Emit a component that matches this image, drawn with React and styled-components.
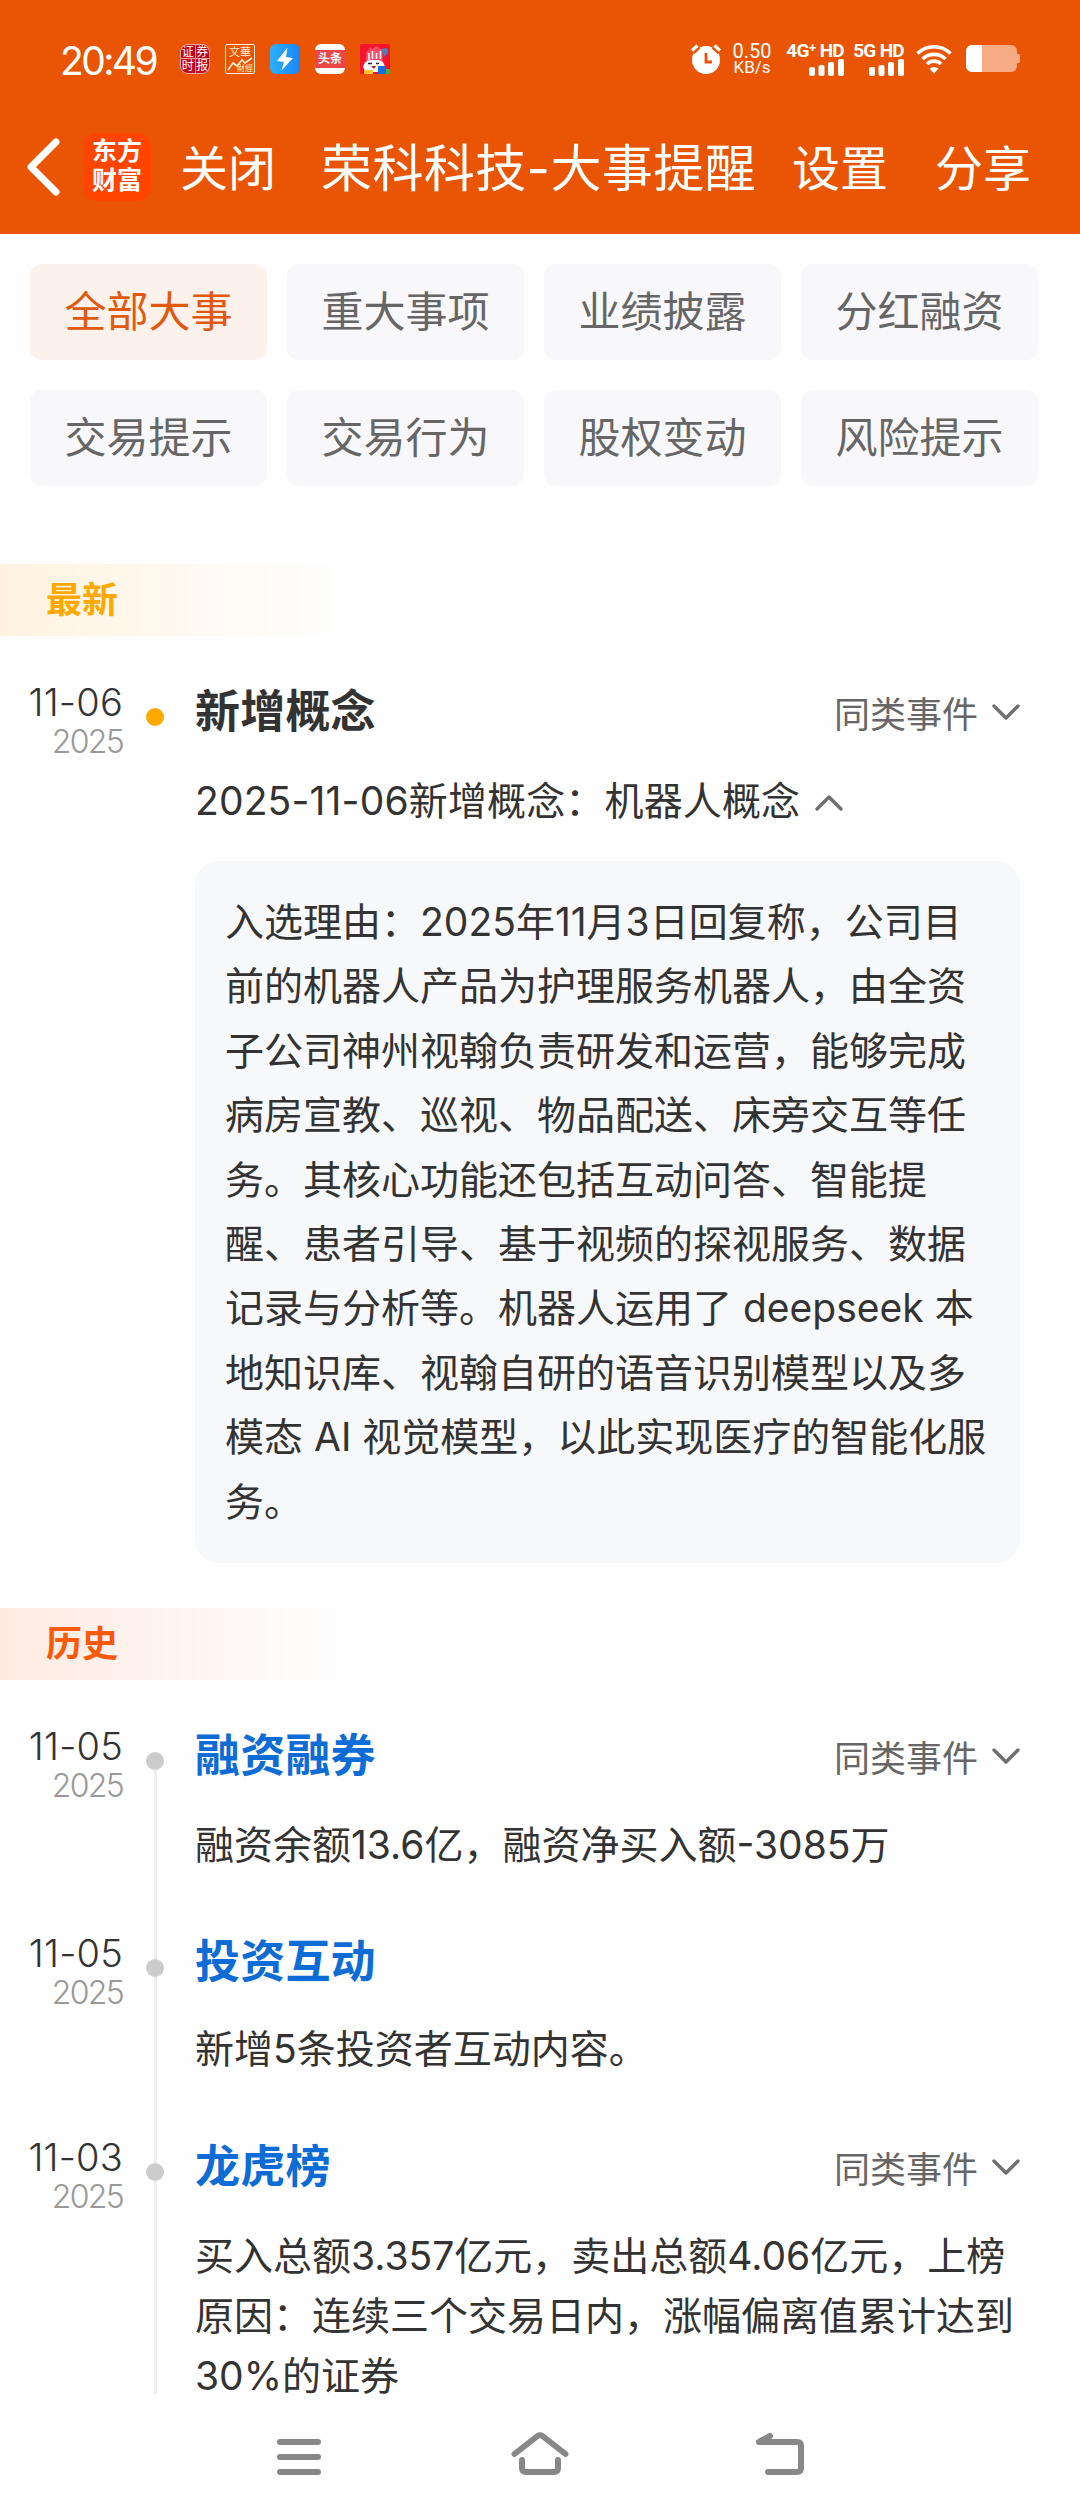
import styled, { createGlobalStyle, css } from "styled-components";

const tabs = [
  "全部大事",
  "重大事项",
  "业绩披露",
  "分红融资",
  "交易提示",
  "交易行为",
  "股权变动",
  "风险提示",
];

const reasonLines = [
  "入选理由：2025年11月3日回复称，公司目",
  "前的机器人产品为护理服务机器人，由全资",
  "子公司神州视翰负责研发和运营，能够完成",
  "病房宣教、巡视、物品配送、床旁交互等任",
  "务。其核心功能还包括互动问答、智能提",
  "醒、患者引导、基于视频的探视服务、数据",
  "记录与分析等。机器人运用了 deepseek 本",
  "地知识库、视翰自研的语音识别模型以及多",
  "模态 AI 视觉模型，以此实现医疗的智能化服",
  "务。",
];

const history = [
  {
    date: "11-05",
    year: "2025",
    title: "融资融券",
    similar: true,
    lines: ["融资余额13.6亿，融资净买入额-3085万"],
  },
  {
    date: "11-05",
    year: "2025",
    title: "投资互动",
    similar: false,
    lines: ["新增5条投资者互动内容。"],
  },
  {
    date: "11-03",
    year: "2025",
    title: "龙虎榜",
    similar: true,
    lines: [
      "买入总额3.357亿元，卖出总额4.06亿元，上榜",
      "原因：连续三个交易日内，涨幅偏离值累计达到",
      "30%的证券",
    ],
  },
];

const Chevron = ({ up }) => (
  <ChevronSvg viewBox="0 0 28 16">
    <path d={up ? "M2 14 14 2l12 12" : "M2 2l12 12L26 2"} />
  </ChevronSvg>
);

const Signal = ({ label, width }) => (
  <SignalWrapper $width={width}>
    <SignalLabel>{label}</SignalLabel>
    <svg width="35" height="17" fill="#fff">
      <rect x="0" y="8" width="6" height="9" rx="2" />
      <rect x="9.5" y="6" width="6" height="11" rx="2" />
      <rect x="19" y="3" width="6" height="14" rx="2" />
      <rect x="29" y="0" width="6" height="17" rx="2" />
    </svg>
  </SignalWrapper>
);

const StatusIcons = () => (
  <AppIcons>
    <SecuritiesTimes>
      <span>证</span>
      <span>券</span>
      <span>时</span>
      <span>报</span>
    </SecuritiesTimes>
    <Wenhua>
      <span>文華</span>
      <svg width="28" height="16" viewBox="0 0 28 16" fill="none" stroke="#fff1d8">
        <path d="M2 14l5-7 4 3 5-6 3 3 7-5" strokeWidth="1.6" />
      </svg>
      <small>財經</small>
    </Wenhua>
    <svg width="30" height="30" viewBox="0 0 30 30">
      <defs>
        <linearGradient id="bolt" x1="0" x2="1">
          <stop offset="0" stopColor="#2bb0fd" />
          <stop offset="1" stopColor="#1a86f5" />
        </linearGradient>
      </defs>
      <rect width="30" height="30" rx="6" fill="url(#bolt)" />
      <path d="M17.500 3.500 7 17l7 1-2.500 8.500L23 14l-7-1z" fill="#fff" />
    </svg>
    <Toutiao>
      <b>头条</b>
    </Toutiao>
    <svg width="30" height="30" viewBox="0 0 30 30">
      <rect width="30" height="30" rx="2" fill="#f5142d" />
      <path d="M21 5l6-1 1 5-4 4z" fill="#4a7fc0" />
      <path d="M6 17V9l4-6 2 2 5-3 5 4 1 12z" fill="#fb4a62" />
      <path
        d="M9 9v7M12.500 7v8M16.500 9v6M20.500 7v8"
        stroke="#fff"
        strokeWidth="1.600"
      />
      <path d="M3 23q1-6 7-7h8q6 1 7 7l-4 5H6z" fill="#fff" />
      <path d="M8 19.500h4M16 19.500h3" stroke="#222" strokeWidth="1.600" />
      <path d="M11 22h5l-2 3z" fill="#a3212b" />
      <path d="M4 26h9v4H4z" fill="#ffc62e" />
      <path d="M18 22h8v8h-8z" fill="#1670dc" />
      <path d="M26 25h4v5h-4z" fill="#38b34a" />
    </svg>
  </AppIcons>
);

const SystemIcons = () => (
  <SystemWrapper>
    <svg width="30" height="30" viewBox="0 0 30 30">
      <circle cx="15" cy="16" r="14" fill="#fff" />
      <path d="M1 7.500 7 2M29 7.500 23 2" stroke="#e95504" strokeWidth="7" />
      <path d="M1 6.500 6.500 1.500M29 6.500 23.500 1.500" stroke="#fff" strokeWidth="3.200" />
      <path d="M15 9v9h6" stroke="#e95504" strokeWidth="2.800" fill="none" />
    </svg>
    <Speed>
      <b>0.50</b>
      <span>KB/s</span>
    </Speed>
    <Signal label="4G⁺ HD" width={58} />
    <Signal label="5G HD" width={49} />
    <Wifi width="36" height="30" viewBox="0 0 36 30">
      <g fill="none" stroke="#fff" strokeWidth="3.600">
        <path d="M1.500 9.500a23.500 23.500 0 0 1 33 0" />
        <path d="M6.500 15a16.500 16.500 0 0 1 23 0" />
        <path d="M11 20a10 10 0 0 1 14 0" />
      </g>
      <path d="M18 29.500l-4.500-4.800a6.500 6.500 0 0 1 9 0z" fill="#fff" />
    </Wifi>
    <svg width="54" height="27" viewBox="0 0 54 27">
      <path
        d="M6 0h39a6 6 0 0 1 6 6v3h1.500a1.500 1.500 0 0 1 1.500 1.500v6a1.500 1.500 0 0 1-1.500 1.500H51v3a6 6 0 0 1-6 6H6a6 6 0 0 1-6-6V6a6 6 0 0 1 6-6z"
        fill="#f7ab84"
      />
      <path d="M16 0H6a6 6 0 0 0-6 6v15a6 6 0 0 0 6 6h10z" fill="#fff" />
    </svg>
  </SystemWrapper>
);

const Similar = () => (
  <SimilarLink>
    同类事件
    <Chevron />
  </SimilarLink>
);

const App = () => {
  return (
    <Page>
      <GlobalStyle />
      <Header>
        <StatusBar>
          <Clock>20:49</Clock>
          <StatusIcons />
          <SystemIcons />
        </StatusBar>
        <TitleBar>
          <BackIcon width="36" height="58" viewBox="0 0 36 58">
            <path d="M32 4 7 29l25 25" />
          </BackIcon>
          <Logo>
            <span>东方</span>
            <span>财富</span>
          </Logo>
          <Action $left={29}>关闭</Action>
          <PageTitle>荣科科技-大事提醒</PageTitle>
          <Action $left={36}>设置</Action>
          <Action $left={47}>分享</Action>
        </TitleBar>
      </Header>

      <Content>
        <Tabs>
          {tabs.map((tab, index) => (
            <Tab key={tab} $active={index === 0}>
              {tab}
            </Tab>
          ))}
        </Tabs>

        <SectionTitle $color="#ffa800" $from="#fff3e0">
          最新
        </SectionTitle>
        <Timeline>
          <Row>
            <DateColumn>
              <Day>11-06</Day>
              <Year>2025</Year>
            </DateColumn>
            <Rail>
              <Line $height="30px" $hidden />
              <Dot $color="#ffa800" />
            </Rail>
            <Body>
              <Head $tall>
                <EventTitle $color="#333">新增概念</EventTitle>
                <Similar />
              </Head>
              <Summary>
                <p>2025-11-06新增概念：机器人概念</p>
                <Chevron up />
              </Summary>
              <Reason>
                {reasonLines.map((line) => (
                  <p key={line}>{line}</p>
                ))}
              </Reason>
            </Body>
          </Row>
        </Timeline>

        <SectionTitle $color="#f95a0a" $from="#ffeae2">
          历史
        </SectionTitle>
        <Timeline>
          {history.map((item, index) => (
            <Row key={item.title}>
              <DateColumn>
                <Day>{item.date}</Day>
                <Year>{item.year}</Year>
              </DateColumn>
              <Rail>
                <Line $height="30px" $hidden={index === 0} />
                <Dot $color="#ccc" />
                <Line />
              </Rail>
              <Body>
                <Head $tall={item.similar}>
                  <EventTitle $color="#0d6cd5">{item.title}</EventTitle>
                  {item.similar && <Similar />}
                </Head>
                <Description>
                  {item.lines.map((line) => (
                    <p key={line}>{line}</p>
                  ))}
                </Description>
              </Body>
            </Row>
          ))}
        </Timeline>
      </Content>

      <NavBar>
        <svg width="60" height="60" viewBox="0 0 60 60">
          <path d="M10 15h38M10 30h38M10 45h38" />
        </svg>
        <svg width="60" height="60" viewBox="0 0 60 60">
          <path d="M4.500 27 27.500 9q2.500-1.500 5 0L55.500 27" />
          <path d="M12 33v8q0 4 4 4h28q4 0 4-4v-8" />
        </svg>
        <svg width="60" height="60" viewBox="0 0 60 60">
          <path d="M20 9 9 15h38q4 0 4 4v22q0 4-4 4H18" />
        </svg>
      </NavBar>
    </Page>
  );
};

const GlobalStyle = createGlobalStyle`
  * {
    box-sizing: border-box;
  }
  body {
    margin: 0;
    background: #fefefe;
    font-family: Inter, "Noto Sans CJK SC", sans-serif;
  }
  p {
    margin: 0;
    white-space: nowrap;
  }
  svg {
    display: block;
    flex: none;
  }
`;

const Page = styled.div`
  display: flex;
  flex-direction: column;
  width: 1080px;
  height: 2520px;
  overflow: hidden;
`;

const Header = styled.header`
  flex: none;
  height: 234px;
  background: #e95504;
  color: #fff;
`;

const StatusBar = styled.div`
  display: flex;
  align-items: center;
  height: 117px;
  padding: 0 60px;
`;

const Clock = styled.div`
  width: 120px;
  padding-top: 3px;
  font-size: 39px;
  letter-spacing: -2.6px;
`;

const AppIcons = styled.div`
  display: flex;
  gap: 15px;
`;

const SecuritiesTimes = styled.div`
  display: grid;
  grid-template-columns: 1fr 1fr;
  gap: 1px;
  width: 30px;
  height: 30px;
  border: 1px solid #e9a79f;
  border-radius: 8px;
  background: #e9a79f;
  overflow: hidden;
  font-size: 12px;
  line-height: 13px;
  text-align: center;
  span {
    background: #c3061f;
  }
`;

const Wenhua = styled.div`
  width: 30px;
  height: 30px;
  border: 1px solid #fff1d8;
  border-radius: 2px;
  color: #fff1d8;
  font-size: 11px;
  line-height: 14px;
  text-align: center;
  svg {
    margin-top: -3px;
  }
  small {
    display: block;
    margin-top: -9px;
    padding-left: 10px;
    font-size: 8px;
    line-height: 10px;
  }
`;

const Toutiao = styled.div`
  width: 30px;
  height: 30px;
  border: solid #fff;
  border-width: 6px 0;
  border-radius: 6px;
  background: #ec4447;
  font-size: 12px;
  line-height: 18px;
  text-align: center;
`;

const SystemWrapper = styled.div`
  display: flex;
  align-items: center;
  margin-left: auto;
`;

const Speed = styled.div`
  display: flex;
  flex-direction: column;
  align-items: center;
  width: 40px;
  margin: 0 14px 0 11px;
  font-family: Roboto, sans-serif;
  b {
    font-size: 20px;
    font-weight: 400;
    line-height: 18px;
  }
  span {
    font-size: 17px;
    line-height: 15px;
  }
`;

const SignalWrapper = styled.div`
  display: flex;
  flex-direction: column;
  align-items: flex-end;
  width: ${(props) => props.$width}px;
  margin-right: 11px;
`;

const SignalLabel = styled.div`
  font-family: Roboto, sans-serif;
  font-size: 19px;
  font-weight: 700;
  line-height: 17px;
  letter-spacing: -0.7px;
  white-space: nowrap;
`;

const Wifi = styled.svg`
  margin: 0 14px 0 1px;
`;

const TitleBar = styled.div`
  display: flex;
  align-items: center;
  height: 99px;
  padding-left: 24px;
  white-space: nowrap;
`;

const BackIcon = styled.svg`
  path {
    fill: none;
    stroke: #fff;
    stroke-width: 7px;
    stroke-linecap: round;
    stroke-linejoin: round;
  }
`;

const Logo = styled.div`
  display: flex;
  flex-direction: column;
  justify-content: center;
  align-items: center;
  width: 68px;
  height: 68px;
  margin-left: 23px;
  padding-bottom: 2px;
  border-radius: 14px;
  background: #ff4500;
  font-size: 25px;
  font-weight: 700;
  line-height: 29px;
`;

const Action = styled.div`
  margin-left: ${(props) => props.$left}px;
  padding-bottom: 4px;
  font-size: 48px;
`;

const PageTitle = styled.div`
  margin-left: 45px;
  padding-bottom: 4px;
  font-size: 51px;
  letter-spacing: 0.4px;
`;

const Content = styled.main`
  flex: 1;
  min-height: 0;
  overflow: hidden;
`;

const Tabs = styled.div`
  display: grid;
  grid-template-columns: repeat(4, 237px);
  grid-auto-rows: 96px;
  gap: 30px 20px;
  padding: 30px 30px 78px;
`;

const Tab = styled.div`
  display: flex;
  align-items: center;
  justify-content: center;
  padding-bottom: 8px;
  border-radius: 12px;
  background: #f8f8fa;
  color: #666;
  font-size: 42px;
  ${(props) =>
    props.$active &&
    css`
      background: #fdf1eb;
      color: #df5a10;
    `}
`;

const SectionTitle = styled.h2`
  height: 72px;
  margin: 0;
  padding-left: 46px;
  background: linear-gradient(
    to right,
    ${(props) => props.$from},
    #fefefe 345px
  );
  color: ${(props) => props.$color};
  font-size: 36px;
  font-weight: 700;
  line-height: 72px;
`;

const Timeline = styled.div`
  padding: 42px 60px 45px 0;
`;

const Body = styled.div`
  flex: 1;
  padding-bottom: 54px;
`;

const Row = styled.div`
  display: flex;
  &:last-child ${Body} {
    padding-bottom: 0;
  }
`;

const DateColumn = styled.div`
  width: 123px;
  padding-top: 1px;
  text-align: right;
`;

const Day = styled.div`
  color: #333;
  font-size: 38px;
  font-weight: 350;
  line-height: 46px;
  letter-spacing: 0.2px;
`;

const Year = styled.div`
  padding-top: 1px;
  color: #999;
  font-size: 32px;
  font-weight: 350;
  line-height: 32px;
  letter-spacing: -1.7px;
`;

const Rail = styled.div`
  display: flex;
  flex-direction: column;
  width: 49px;
  margin-left: 23px;
`;

const Dot = styled.div`
  flex: none;
  width: 18px;
  height: 18px;
  border-radius: 50%;
  background: ${(props) => props.$color};
`;

const Line = styled.div`
  flex: ${(props) => (props.$height ? "none" : 1)};
  width: 3px;
  height: ${(props) => props.$height};
  margin-left: 8px;
  background: ${(props) => (props.$hidden ? "transparent" : "#eee")};
`;

const Head = styled.div`
  display: flex;
  align-items: center;
  justify-content: space-between;
  height: ${(props) => (props.$tall ? 66 : 63)}px;
  margin-bottom: 27px;
`;

const EventTitle = styled.h3`
  margin: 0;
  padding-top: 2px;
  color: ${(props) => props.$color};
  font-size: 45px;
  font-weight: 700;
  line-height: 60px;
  letter-spacing: 0.2px;
`;

const SimilarLink = styled.div`
  display: flex;
  align-items: center;
  gap: 14px;
  padding-top: 1px;
  color: #666;
  font-size: 36px;
`;

const ChevronSvg = styled.svg`
  width: 28px;
  height: 16px;
  fill: none;
  stroke: #707070;
  stroke-width: 3.4px;
  stroke-linecap: round;
  stroke-linejoin: round;
`;

const Summary = styled.div`
  display: flex;
  align-items: center;
  gap: 15px;
  color: #333;
  font-size: 39px;
  line-height: 60px;
  letter-spacing: 0.15px;
  ${ChevronSvg} {
    margin-top: 4px;
  }
`;

const Description = styled.div`
  color: #333;
  font-size: 39px;
  line-height: 60px;
`;

const Reason = styled.div`
  margin-top: 30px;
  padding: 29px 30px;
  border-radius: 24px;
  background: #f7f8fa;
  color: #333;
  font-size: 39px;
  line-height: 64.4px;
`;

const NavBar = styled.nav`
  display: flex;
  flex: none;
  justify-content: center;
  gap: 180px;
  height: 126px;
  padding-top: 33px;
  background: #fefefe;
  svg {
    fill: none;
    stroke: #888;
    stroke-width: 6px;
    stroke-linecap: round;
    stroke-linejoin: round;
  }
`;

export default App;
